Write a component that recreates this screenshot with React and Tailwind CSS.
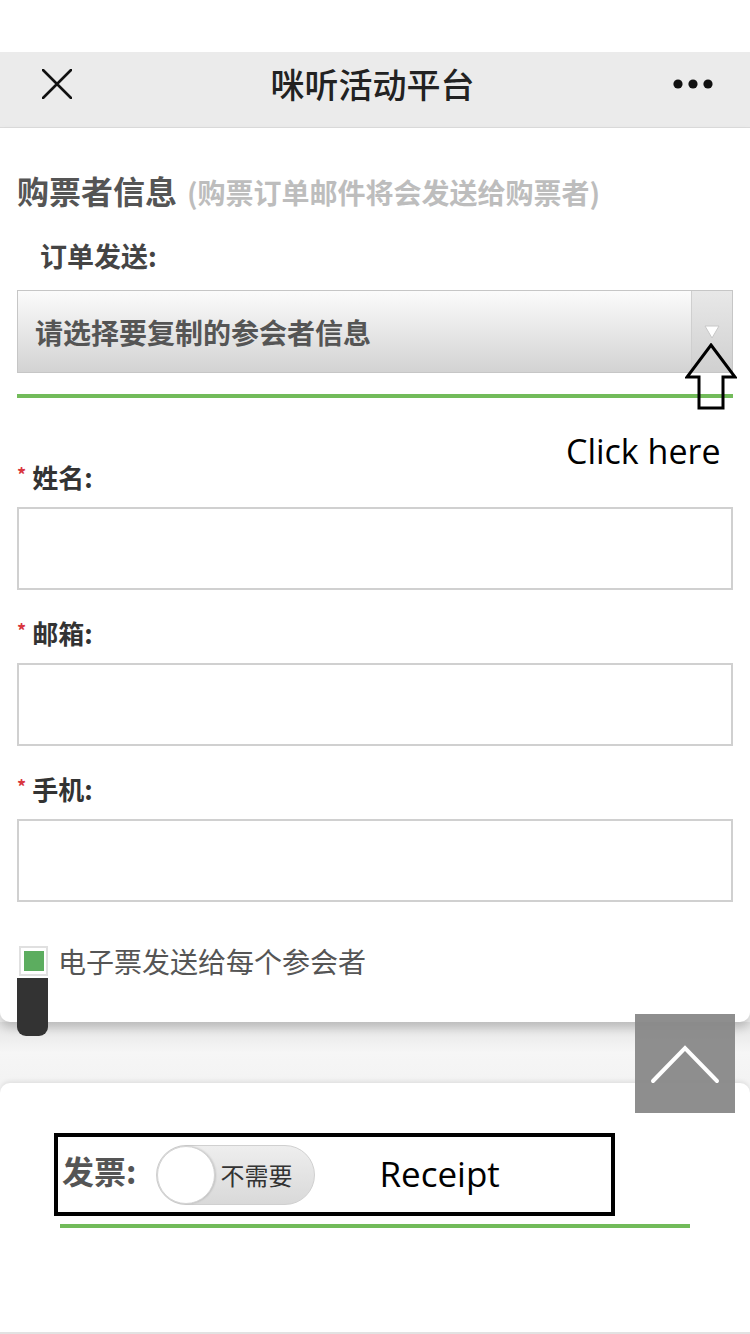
import React from 'react';

const Field = ({ label }) => (
  <div className="flex flex-col">
    <div className="flex items-center h-[40px] text-[26px] font-bold text-[#333] leading-none">
      <span className="text-[#d9363e] text-[18px] mr-[6px] -mt-[6px]">*</span>
      {label}:
    </div>
    <div className="mt-[10px] h-[83px] border-2 border-[#d0d0d0] bg-white" />
  </div>
);

const App = () => {
  return (
    <div className="relative w-[750px] h-[1334px] overflow-hidden bg-[#f3f3f3] font-['Noto_Sans_CJK_SC',sans-serif]">
      {/* status area */}
      <div className="h-[52px] bg-white" />

      {/* nav bar */}
      <div className="h-[76px] bg-[#ebebeb] border-b border-[#dcdcdc] flex items-center justify-between px-[42px] pb-[12px]">
        <svg width="30" height="30" viewBox="0 0 30 30" className="shrink-0">
          <path d="M1 1 L29 29 M29 1 L1 29" stroke="#111" strokeWidth="2.6" strokeLinecap="round" />
        </svg>
        <div className="text-[34px] font-medium text-[#222]">咪听活动平台</div>
        <svg width="40" height="10" viewBox="0 0 40 10" className="shrink-0 mr-[-5px]">
          <circle cx="5" cy="5" r="4.6" fill="#111" />
          <circle cx="20" cy="5" r="4.6" fill="#111" />
          <circle cx="35" cy="5" r="4.6" fill="#111" />
        </svg>
      </div>

      {/* main card */}
      <div className="relative bg-white rounded-b-[10px] shadow-[0_6px_10px_rgba(0,0,0,0.18)] px-[17px] pt-[40px] h-[894px]">
        <div className="flex items-baseline h-[44px] leading-[44px]">
          <span className="text-[32px] font-bold text-[#555]">购票者信息</span>
          <span className="ml-[10px] text-[28px] font-bold text-[#bdbdbd]">(购票订单邮件将会发送给购票者)</span>
        </div>

        <div className="mt-[24px] pl-[23px] h-[40px] flex items-center text-[27px] font-bold text-[#444]">订单发送:</div>

        <div className="mt-[14px] h-[83px] flex border border-[#c6c6c6] bg-gradient-to-b from-[#fbfbfb] to-[#d3d3d3]">
          <div className="flex-1 flex items-center pl-[17px] text-[28px] font-bold text-[#555]">请选择要复制的参会者信息</div>
          <div className="w-[41px] flex items-center justify-center border-l border-[#cfcfcf] bg-gradient-to-b from-[#e8e8e8] to-[#d0d0d0]">
            <svg width="16" height="14" viewBox="0 0 16 14">
              <path d="M1 1 L15 1 L8 13 Z" fill="#fff" stroke="#c8c8c8" strokeWidth="1" />
            </svg>
          </div>
        </div>

        <div className="mt-[21px] h-[4px] bg-[#72bb5a]" />

        <div className="mt-[59px] flex flex-col gap-[23px]">
          <Field label="姓名" />
          <Field label="邮箱" />
          <Field label="手机" />
        </div>

        <div className="mt-[38px] flex items-center">
          <div className="w-[29px] h-[30px] ml-[2px] border-2 border-[#e0e0e0] flex items-center justify-center">
            <div className="w-[20px] h-[20px] bg-[#5cad5f]" />
          </div>
          <span className="ml-[10px] text-[28px] text-[#555]">电子票发送给每个参会者</span>
        </div>

        {/* annotation: arrow + click here */}
        <svg className="absolute left-[685px] top-[215px]" width="52" height="68" viewBox="0 0 52 68">
          <path d="M26 2 L50 34 L38 34 L38 65 L14 65 L14 34 L2 34 Z" fill="none" stroke="#000" strokeWidth="3" strokeLinejoin="miter" />
        </svg>
        <div className="absolute left-[566px] top-[299px] text-[34px] leading-[48px] text-black font-['Open_Sans',sans-serif]">Click here</div>
      </div>

      {/* dark scroll handle */}
      <div className="absolute left-[17px] top-[978px] w-[31px] h-[58px] bg-[#333] rounded-b-[9px]" />

      {/* gap between cards */}
      <div className="h-[61px] bg-gradient-to-b from-[#e4e4e4] via-[#f6f6f6] to-[#f3f3f3]" />

      {/* receipt card */}
      <div className="bg-white rounded-t-[10px] shadow-[0_-2px_4px_rgba(0,0,0,0.08)] h-[251px] pt-[50px] pl-[54px] border-b-2 border-[#e2e2e2]">
        <div className="w-[561px] h-[83px] border-4 border-black flex items-center pl-[4px]">
          <span className="text-[32px] font-bold text-[#555] -mt-[10px]">发票:</span>
          <div className="relative ml-[20px] w-[159px] h-[60px] rounded-full border border-[#d0d0d0] bg-gradient-to-b from-[#eeeeee] to-[#d9d9d9] flex items-center">
            <div className="w-[58px] h-[58px] rounded-full bg-white border border-[#d4d4d4] shadow-[1px_0_2px_rgba(0,0,0,0.15)]" />
            <span className="ml-[5px] text-[24px] text-[#333]">不需要</span>
          </div>
          <span className="ml-[64px] text-[35px] text-black font-['Open_Sans',sans-serif]">Receipt</span>
        </div>
        <div className="mt-[8px] ml-[6px] w-[630px] h-[4px] bg-[#72bb5a]" />
      </div>

      {/* back to top */}
      <div className="absolute left-[635px] top-[1014px] w-[100px] h-[99px] bg-[#888]/95 flex items-center justify-center">
        <svg width="70" height="40" viewBox="0 0 70 40">
          <path d="M3 37 L35 4 L67 37" fill="none" stroke="#fff" strokeWidth="4" strokeLinecap="round" />
        </svg>
      </div>
    </div>
  );
};

export default App;
